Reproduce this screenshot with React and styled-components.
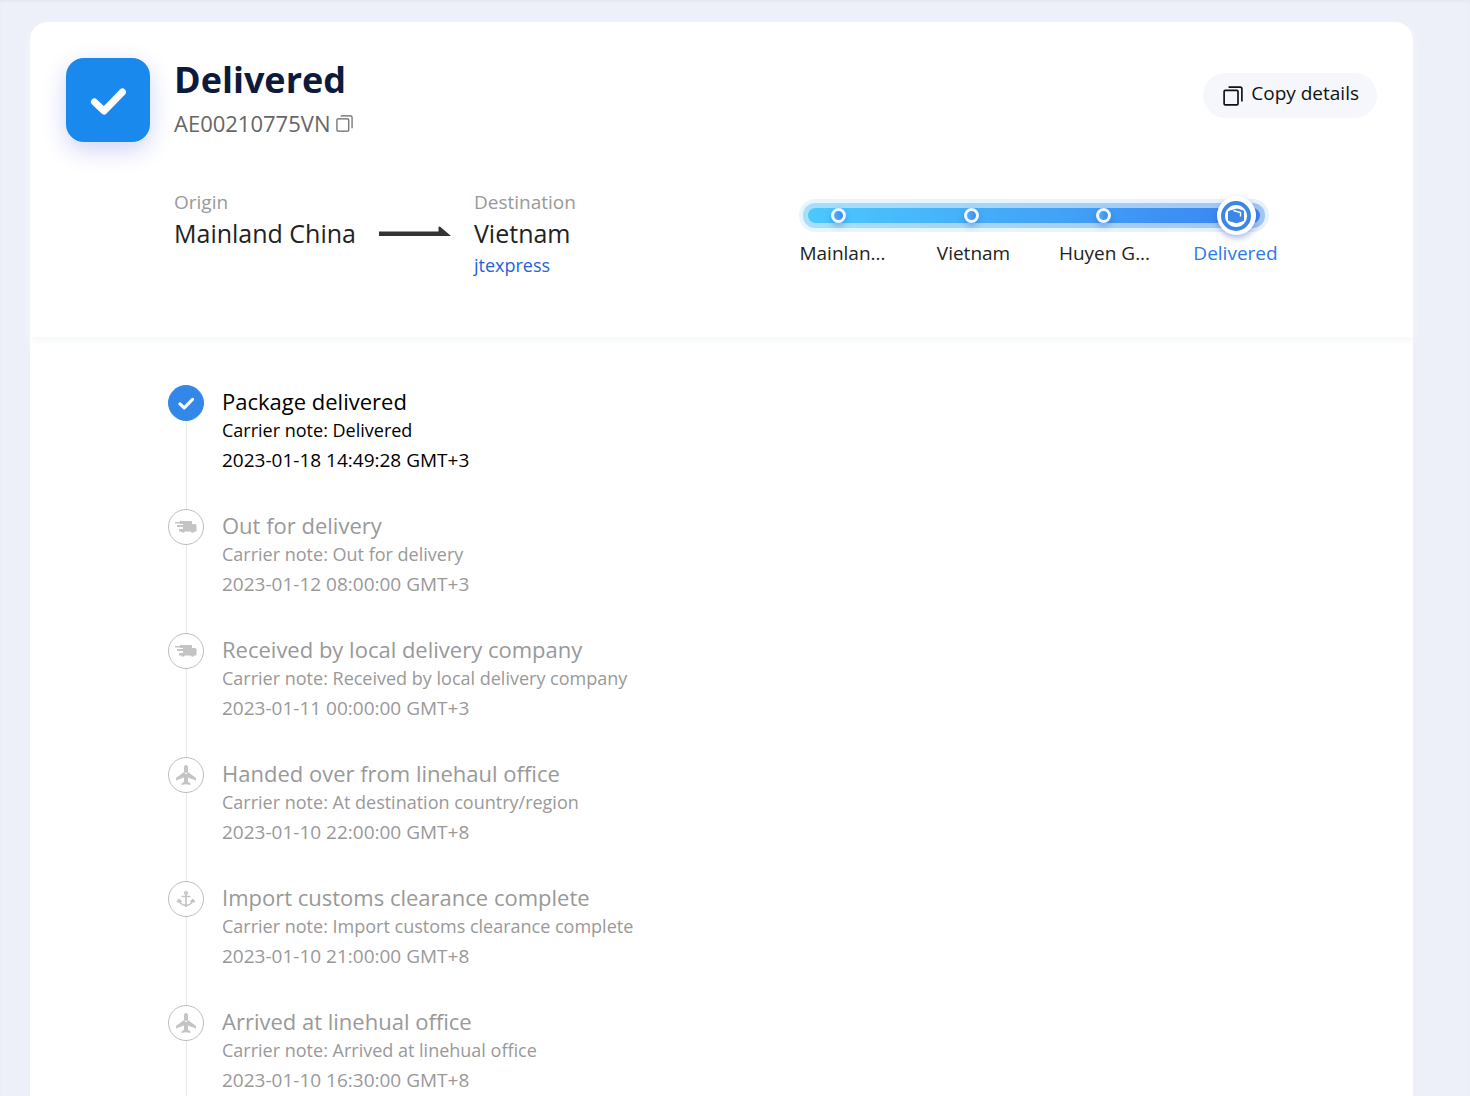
import React from 'react';
import styled, { createGlobalStyle } from 'styled-components';


const GlobalStyle = createGlobalStyle`
  * {
    box-sizing: border-box;
  }

  body {
    margin: 0;
    background: #edf0f9;
    color: #1c1c1e;
    font-family: "Open Sans", "Noto Sans", sans-serif;
    font-size: 18px;
  }
`

const Page = styled.main`
  display: flex;
  min-height: 100vh;
  padding: 22px 57px 0 30px;
  box-shadow: inset 0 2px 2px #e5e9f2;
`

const Card = styled.article`
  flex: 1;
  min-width: 0;
  background: #fff;
  border-radius: 18px 18px 0 0;
`

const Header = styled.header`
  height: 315px;
  padding: 36px 36px 0;
  border-radius: 18px 18px 0 0;
  box-shadow: 0 4px 8px #f6f7fa;
`

const TopRow = styled.div`
  display: flex;
  align-items: flex-start;
  gap: 24px;
`

const StatusBadge = styled.div`
  display: flex;
  align-items: center;
  justify-content: center;
  width: 84px;
  height: 84px;
  border-radius: 18px;
  background: #1989ee;
  box-shadow: 0 8px 24px #cfd3f5;
`

const StatusText = styled.div`
  flex: 1;
`

const Title = styled.h1`
  margin: 0;
  color: #0d1a3c;
  font-size: 36px;
  font-weight: 700;
  line-height: 44px;
`

const TrackingNumber = styled.div`
  display: flex;
  align-items: center;
  gap: 6px;
  color: #666;
  font-size: 22px;
  line-height: 42px;
`

const IconButton = styled.button`
  display: flex;
  padding: 0;
  border: 0;
  background: none;
  color: #666;
  cursor: pointer;
`

const CopyButton = styled.button`
  display: flex;
  align-items: center;
  gap: 8px;
  height: 45px;
  margin-top: 15px;
  padding: 0 18px 0 20px;
  border: 0;
  border-radius: 23px;
  background: #f5f7fc;
  color: #111;
  font-family: inherit;
  font-size: 19px;
  line-height: 24px;
  cursor: pointer;

  span {
    padding-bottom: 5px;
  }
`

const RouteRow = styled.div`
  display: flex;
  align-items: flex-start;
  justify-content: space-between;
  padding: 46px 108px 0 108px;
`

const Route = styled.div`
  display: flex;
`

const Place = styled.div`
  display: flex;
  flex-direction: column;
`

const PlaceLabel = styled.span`
  color: #999;
  font-size: 19px;
  line-height: 24px;
`

const PlaceName = styled.span`
  color: #222;
  font-size: 25px;
  line-height: 38px;
`

const CarrierLink = styled.a`
  color: #1f62d9;
  font-size: 18px;
  line-height: 26px;
  text-decoration: none;
`

const Arrow = styled.svg`
  margin: 36px 23px 0;
`

const Progress = styled.div`
  width: 470px;
  margin-top: 9px;
`

const Halo = styled.div`
  padding: 4px;
  border-radius: 17px;
  background: linear-gradient(90deg, #e6f6fe, #e8f1fd);
`

const Ring = styled.div`
  padding: 5px;
  border-radius: 12px;
  background: linear-gradient(90deg, #a6dffa, #a3c6f3);
`

const Track = styled.div`
  display: flex;
  align-items: center;
  justify-content: space-between;
  height: 15px;
  padding: 0 16px 0 23px;
  border-radius: 8px;
  background: linear-gradient(90deg, #4cc8fd, #3983f2);
`

const Dot = styled.span`
  width: 15px;
  height: 15px;
  border: 3px solid #eef6ff;
  border-radius: 50%;
  background: linear-gradient(90deg, #55aef6, #3a8bec);
  box-shadow: 0 3px 6px rgba(40, 90, 190, 0.4);
`

const EndMarker = styled.span`
  display: flex;
  align-items: center;
  justify-content: center;
  width: 39px;
  height: 39px;
  margin: 0 -12px;
  border-radius: 50%;
  background: #fff;
  box-shadow: 0 3px 6px rgba(40, 80, 190, 0.4);
`

const Stops = styled.ol`
  display: grid;
  grid-template-columns: repeat(4, 131px);
  margin: 7px -32px 0 -22px;
  padding: 0;
  list-style: none;
`

const Stop = styled.li`
  color: ${(props) => (props.$active ? '#2b78ec' : '#222')};
  font-size: 19px;
  line-height: 28px;
  text-align: center;
`

const Timeline = styled.ol`
  margin: 0;
  padding: 48px 36px 0 138px;
  list-style: none;
`

const Event = styled.li`
  display: flex;
  gap: 18px;
  height: 124px;
  color: ${(props) => (props.$active ? '#000' : '#999')};

  &:last-child {
    height: 111px;
  }
`

const Rail = styled.div`
  display: flex;
  flex-direction: column;
  align-items: center;

  &::after {
    content: '';
    flex: 1;
    width: 1px;
    background: #e8e8e8;
  }
`

const EventIcon = styled.span`
  display: flex;
  align-items: center;
  justify-content: center;
  width: 36px;
  height: 36px;
  border: 1px solid ${(props) => (props.$active ? '#3287e8' : '#bdbdbd')};
  border-radius: 50%;
  background: ${(props) => (props.$active ? '#3287e8' : '#fff')};
  color: #c4c4c4;
`

const EventTitle = styled.h2`
  margin: 0;
  padding-top: 1px;
  font-size: 22px;
  font-weight: 400;
  line-height: 30px;
`

const EventNote = styled.p`
  margin: 0;
  font-size: 18px;
  line-height: 29px;
`

const EventDate = styled.time`
  display: block;
  font-size: 19px;
  line-height: 30px;
`


const CheckIcon = ({ size }) => (
  <svg width={size} height={size} viewBox="0 0 40 40" fill="none" stroke="#fff" strokeWidth="7" strokeLinecap="round" strokeLinejoin="round">
    <path d="M6.500 22L16 31L34.500 12" />
  </svg>
)

const CopyIcon = ({ size, stroke }) => (
  <svg width={size} height={size} viewBox="0 0 18 18" fill="none" stroke="currentColor" strokeWidth={stroke} strokeLinejoin="round">
    <rect x="1" y="4" width="12.500" height="13" rx="1" />
    <path d="M5 1H15.500Q17 1 17 2.500V14" />
  </svg>
)

const PackageIcon = () => (
  <svg width="30" height="30" viewBox="0 0 30 30" fill="none">
    <circle cx="15" cy="15" r="13" fill="#fff" stroke="#3d86e6" strokeWidth="4" />
    <path d="M7.500 10.500L16 8L22.500 10V19.500L15.500 21.800L7.500 19.500Z" fill="#3d86e6" stroke="#3d86e6" strokeLinejoin="round" />
    <path d="M12.500 9.500L19.500 11.500V15.500" stroke="#fff" strokeWidth="1.400" />
  </svg>
)

const TruckIcon = () => (
  <svg width="24" height="14" viewBox="0 0 24 14" fill="currentColor">
    <path d="M6 1H18V4H21Q22.500 4 22.500 5.500V11.500H5V9H9V7H3V6H9V4H6Z" />
    <path d="M1 2H8V3.500H1ZM3 5H9V6H3Z" />
    <circle cx="9" cy="11" r="1.800" />
    <circle cx="18.500" cy="11" r="1.800" />
  </svg>
)

const PlaneIcon = () => (
  <svg width="22" height="22" viewBox="0 0 22 22" fill="currentColor">
    <path d="M11 1Q13 1 13 4V8L21 14V16.500L13 13.500V17.500L15.500 19.500V21L11 20.300L6.500 21V19.500L9 17.500V13.500L1 16.500V14L9 8V4Q9 1 11 1Z" />
    <path d="M9.500 8.500L11 10L12.500 8.500" fill="none" stroke="#fff" strokeWidth="1" />
  </svg>
)

const AnchorIcon = () => (
  <svg width="20" height="18" viewBox="0 0 20 18" fill="none" stroke="currentColor" strokeWidth="1.600">
    <circle cx="10" cy="3" r="1.300" />
    <path d="M10 4.500V16M5.500 6.500H14.500M3 10Q3.500 14.500 10 15.500Q16.500 14.500 17 10" />
    <path d="M1 12L3 9L5.800 11.500ZM19 12L17 9L14.200 11.500ZM8.500 15H11.500L10 17Z" fill="currentColor" strokeWidth="1" />
  </svg>
)

const icons = {
  check: <CheckIcon size={18} />,
  truck: <TruckIcon />,
  plane: <PlaneIcon />,
  anchor: <AnchorIcon />,
}

const events = [
  { icon: 'check', title: 'Package delivered', note: 'Delivered', date: '2023-01-18 14:49:28 GMT+3' },
  { icon: 'truck', title: 'Out for delivery', note: 'Out for delivery', date: '2023-01-12 08:00:00 GMT+3' },
  { icon: 'truck', title: 'Received by local delivery company', note: 'Received by local delivery company', date: '2023-01-11 00:00:00 GMT+3' },
  { icon: 'plane', title: 'Handed over from linehaul office', note: 'At destination country/region', date: '2023-01-10 22:00:00 GMT+8' },
  { icon: 'anchor', title: 'Import customs clearance complete', note: 'Import customs clearance complete', date: '2023-01-10 21:00:00 GMT+8' },
  { icon: 'plane', title: 'Arrived at linehual office', note: 'Arrived at linehual office', date: '2023-01-10 16:30:00 GMT+8' },
]

function App() {
  return (
    <Page>
      <GlobalStyle />
      <Card>
        <Header>
          <TopRow>
            <StatusBadge>
              <CheckIcon size={40} />
            </StatusBadge>
            <StatusText>
              <Title>Delivered</Title>
              <TrackingNumber>
                AE00210775VN
                <IconButton aria-label="Copy tracking number">
                  <CopyIcon size={17} stroke={1.3} />
                </IconButton>
              </TrackingNumber>
            </StatusText>
            <CopyButton>
              <CopyIcon size={20} stroke={1.5} />
              <span>Copy details</span>
            </CopyButton>
          </TopRow>

          <RouteRow>
            <Route>
              <Place>
                <PlaceLabel>Origin</PlaceLabel>
                <PlaceName>Mainland China</PlaceName>
              </Place>
              <Arrow width="72" height="12" viewBox="0 0 72 12" fill="#333">
                <path d="M0 5.500H59.500V1.500Q59.500 0 61.500 1L72 10H0Z" />
              </Arrow>
              <Place>
                <PlaceLabel>Destination</PlaceLabel>
                <PlaceName>Vietnam</PlaceName>
                <CarrierLink href="#jtexpress">jtexpress</CarrierLink>
              </Place>
            </Route>

            <Progress>
              <Halo>
                <Ring>
                  <Track>
                    <Dot />
                    <Dot />
                    <Dot />
                    <EndMarker>
                      <PackageIcon />
                    </EndMarker>
                  </Track>
                </Ring>
              </Halo>
              <Stops>
                <Stop>Mainlan...</Stop>
                <Stop>Vietnam</Stop>
                <Stop>Huyen G...</Stop>
                <Stop $active>Delivered</Stop>
              </Stops>
            </Progress>
          </RouteRow>
        </Header>

        <Timeline>
          {events.map((event, index) => (
            <Event key={event.date} $active={index === 0}>
              <Rail>
                <EventIcon $active={index === 0}>{icons[event.icon]}</EventIcon>
              </Rail>
              <div>
                <EventTitle>{event.title}</EventTitle>
                <EventNote>Carrier note: {event.note}</EventNote>
                <EventDate>{event.date}</EventDate>
              </div>
            </Event>
          ))}
        </Timeline>
      </Card>
    </Page>
  )
}

export default App;
